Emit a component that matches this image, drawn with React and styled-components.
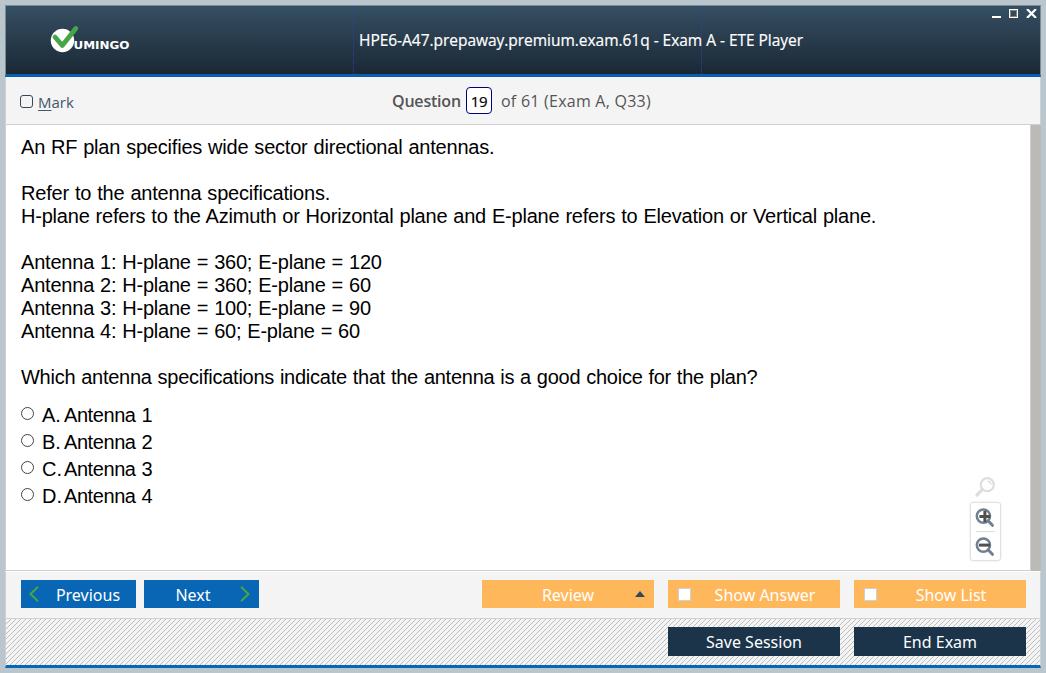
import React from "react";
import styled, { createGlobalStyle } from "styled-components";

const Global = createGlobalStyle`
  * { box-sizing: border-box; }
  body { margin: 0; background: #b9c6cd; }
  button { font: inherit; border: 0; padding: 0; margin: 0; }
`;

const Desktop = styled.div`
  width: 1046px;
  height: 673px;
  padding: 5px;
  background: #b9c6cd;
  font-family: "Open Sans", "Noto Sans", sans-serif;
`;

const Window = styled.main`
  display: flex;
  flex-direction: column;
  width: 1036px;
  height: 663px;
`;

const Header = styled.header`
  position: relative;
  display: flex;
  height: 72px;
  border: 1px solid #7b8c91;
  border-bottom: 3px solid #0560b0;
  background: linear-gradient(#364f63, #1a2835);
`;

const HeaderCell = styled.div`
  width: ${(p) => p.$width}px;
  flex: none;
  border-right: ${(p) => (p.$last ? "0" : "1px dotted #3040a0")};
`;

const LogoSvg = styled.svg`
  display: block;
  margin: 18px 0 0 43px;
`;

const Title = styled.h1`
  position: absolute;
  left: 353px;
  top: 23px;
  margin: 0;
  color: #fff;
  font-size: 15.5px;
  font-weight: 400;
  line-height: 22px;
  white-space: nowrap;
  letter-spacing: -0.03px;
  -webkit-text-stroke: 0.2px #fff;
`;

const WindowControls = styled.div`
  position: absolute;
  right: 3px;
  top: 3px;
  display: flex;
`;

const Toolbar = styled.div`
  display: flex;
  align-items: center;
  height: 48px;
  padding-left: 14px;
  border: 1px solid #cfcfcf;
  border-top: 0;
  background: #f4f4f4;
  color: #555;
  font-size: 16px;
  line-height: 24px;
  white-space: nowrap;
`;

const MarkLabel = styled.label`
  display: flex;
  align-items: center;
  width: 372px;
  padding-top: 3px;
  color: #44566a;
  font-size: 15px;
  u { text-underline-offset: 2px; }
`;

const MarkBox = styled.span`
  width: 13px;
  height: 13px;
  margin: -1px 5px 0 0;
  border: 1px solid #34495e;
  border-radius: 3px;
`;

const QuestionWord = styled.span`
  width: 74px;
  font-weight: 600;
  letter-spacing: -0.2px;
`;

const NumberBox = styled.span`
  width: 26px;
  height: 27px;
  margin-right: 9px;
  border: 1px solid #000080;
  border-radius: 4px;
  background: #fff;
  color: #000;
  font-size: 15px;
  line-height: 26px;
  text-align: center;
  letter-spacing: -0.3px;
  -webkit-text-stroke: 0.2px #000;
`;

const Total = styled.span`
  letter-spacing: 0.24px;
`;

const Content = styled.section`
  position: relative;
  height: 446px;
  padding: 11px 0 0 15px;
  border-left: 1px solid #cfcfcf;
  border-right: 10px solid #bbbab6;
  box-shadow: inset -1px -1px 0 #cfcfcf;
  background: #fff;
  color: #000;
  font-family: "Liberation Sans", Arial, sans-serif;
  font-size: 20px;
  line-height: 23px;
  white-space: nowrap;
`;

const Line = styled.p`
  height: 23px;
  margin: 0;
  letter-spacing: ${(p) => p.$spacing}px;
  word-spacing: 0.6px;
`;

const Options = styled.div`
  display: flex;
  flex-direction: column;
  margin-top: 13px;
`;

const Option = styled.label`
  display: flex;
  height: 27px;
  line-height: 27px;
`;

const Radio = styled.span`
  width: 13px;
  height: 13px;
  margin: 5px 8px 0 0;
  border: 1px solid #444;
  border-radius: 50%;
`;

const Letter = styled.span`
  width: 22px;
`;

const OptionText = styled.span`
  letter-spacing: -0.42px;
  word-spacing: 0.7px;
`;

const ZoomTools = styled.div`
  position: absolute;
  left: 964px;
  top: 351px;
  display: flex;
  flex-direction: column;
  width: 31px;
`;

const ZoomPanel = styled.div`
  display: flex;
  flex-direction: column;
  align-items: center;
  height: 59px;
  border: 1px solid #e2e2e2;
  border-radius: 3px;
  box-shadow: 0 0 2px #ddd;
`;

const Divider = styled.div`
  width: 19px;
  height: 1px;
  background: #dcdcdc;
`;

const ToolIcon = styled.svg`
  display: block;
  flex: none;
`;

const Navigation = styled.footer`
  display: flex;
  height: 48px;
  padding: 8px 14px 0 15px;
  border: 1px solid #cfcfcf;
  border-top: 1px solid #fff;
  background: #f4f4f4;
`;

const ButtonBase = styled.button`
  display: flex;
  align-items: center;
  justify-content: center;
  height: 28px;
  color: #fff;
  font-family: "Noto Sans", sans-serif;
  font-size: 16px;
  line-height: 28px;
  white-space: nowrap;
`;

const NavButton = styled(ButtonBase)`
  position: relative;
  width: 115px;
  margin-right: 8px;
  padding: 2px ${(p) => p.$right || 0}px 0 ${(p) => p.$left || 0}px;
  background: #0866b5;
`;

const Chevron = styled.svg`
  position: absolute;
  top: 6px;
  ${(p) => p.$side}: ${(p) => (p.$side === "left" ? 8 : 9)}px;
`;

const ActionGroup = styled.div`
  display: flex;
  gap: 14px;
  margin-left: auto;
`;

const ActionButton = styled(ButtonBase)`
  position: relative;
  width: 172px;
  padding: 2px 0 0 ${(p) => p.$shift || 0}px;
  background: #ffb75c;
`;

const ActionCheck = styled.span`
  position: absolute;
  left: 10px;
  top: 8px;
  width: 13px;
  height: 13px;
  border: 1px solid #d0d0d0;
  background: #fff;
`;

const Arrow = styled.svg`
  position: absolute;
  right: 9px;
  top: 11px;
`;

const SessionBar = styled.div`
  display: flex;
  justify-content: flex-end;
  gap: 14px;
  height: 49px;
  padding: 8px 14px 0 0;
  border: 1px solid #cfcfcf;
  border-top: 0;
  border-bottom: 3px solid #0866b5;
  background: #f4f4f4 linear-gradient(135deg, transparent 45%, #bdbdbd 45% 55%, transparent 55%) 0 0 / 5px 5px;
`;

const SessionButton = styled(ButtonBase)`
  width: 172px;
  height: 29px;
  padding-top: 1px;
  background: #1b344a;
`;

const Logo = () => (
  <LogoSvg width="84" height="32" viewBox="0 0 84 32">
    <circle cx="13.5" cy="16.5" r="11.7" fill="#fff" />
    <path d="M6 13 13.3 21.5 26.8 4.5" fill="none" stroke="#46a546" strokeWidth="4.8" strokeLinecap="round" strokeLinejoin="round" />
    <text x="24.5" y="25" fill="#fff" fontFamily="DejaVu Sans" fontWeight="700" fontSize="10" textLength="56" lengthAdjust="spacingAndGlyphs">UMINGO</text>
  </LogoSvg>
);

const Magnifier = ({ plus }) => (
  <ToolIcon width="29" height="28" viewBox="0.6 0.4 29 28">
    <circle cx="13" cy="13.5" r="6.6" fill="#fff" stroke="#708090" strokeWidth="2.5" />
    <path d="m17.7 18.2 4.3 4.5" stroke="#708090" strokeWidth="3" strokeLinecap="round" />
    <path d={plus ? "M9 14h11M14.5 8.5v11" : "M8.5 13.5h11"} stroke="#505050" strokeWidth="3" />
  </ToolIcon>
);

const lines = [
  ["An RF plan specifies wide sector directional antennas.", -0.205],
  ["", 0],
  ["Refer to the antenna specifications.", -0.19],
  ["H-plane refers to the Azimuth or Horizontal plane and E-plane refers to Elevation or Vertical plane.", -0.21],
  ["", 0],
  ["Antenna 1: H-plane = 360; E-plane = 120", -0.21],
  ["Antenna 2: H-plane = 360; E-plane = 60", -0.21],
  ["Antenna 3: H-plane = 100; E-plane = 90", -0.21],
  ["Antenna 4: H-plane = 60; E-plane = 60", -0.21],
  ["", 0],
  ["Which antenna specifications indicate that the antenna is a good choice for the plan?", -0.257],
];

export default function App() {
  return (
    <Desktop>
      <Global />
      <Window>
        <Header>
          <HeaderCell $width={348}><Logo /></HeaderCell>
          <HeaderCell $width={348} />
          <HeaderCell $width={338} $last />
          <Title>HPE6-A47.prepaway.premium.exam.61q - Exam A - ETE Player</Title>
          <WindowControls>
            <svg width="45" height="9" viewBox="0 0 45 9" shapeRendering="crispEdges">
              <path d="M0 7h9v2H0z" fill="#fff" />
              <rect x="18.5" y="1.5" width="6" height="6" fill="none" stroke="#8a8078" />
              <rect x="17.5" y="0.5" width="8" height="8" fill="none" stroke="#fff" />
              <path d="m35 0 9 9M44 0l-9 9" stroke="#fff" strokeWidth="2.2" shapeRendering="auto" />
            </svg>
          </WindowControls>
        </Header>
        <Toolbar>
          <MarkLabel><MarkBox /><span><u>M</u>ark</span></MarkLabel>
          <QuestionWord>Question</QuestionWord>
          <NumberBox>19</NumberBox>
          <Total>of 61 (Exam A, Q33)</Total>
        </Toolbar>
        <Content>
          {lines.map(([text, spacing], i) => <Line key={i} $spacing={spacing}>{text}</Line>)}
          <Options>
            {["A", "B", "C", "D"].map((c, i) => (
              <Option key={c}><Radio /><Letter>{c}.</Letter><OptionText>Antenna {i + 1}</OptionText></Option>
            ))}
          </Options>
          <ZoomTools>
            <ToolIcon width="31" height="26" viewBox="0 0 31 26">
              <circle cx="17.3" cy="8.7" r="6.5" fill="none" stroke="#dedede" strokeWidth="2.2" />
              <path d="M12.3 13.7 7 19" stroke="#dedede" strokeWidth="3.2" strokeLinecap="round" />
              <path d="M17.5 5.2a3.5 3.5 0 0 1 3.5 3.5" fill="none" stroke="#dedede" strokeWidth="1.4" />
            </ToolIcon>
            <ZoomPanel>
              <Magnifier plus />
              <Divider />
              <Magnifier />
            </ZoomPanel>
          </ZoomTools>
        </Content>
        <Navigation>
          <NavButton $left={19}>
            <Chevron $side="left" width="10" height="16" viewBox="0 0 10 16"><path d="M9 .7 1.5 8 9 15.3" fill="none" stroke="#46a546" strokeWidth="2" /></Chevron>
            Previous
          </NavButton>
          <NavButton $right={17}>
            Next
            <Chevron $side="right" width="10" height="16" viewBox="0 0 10 16"><path d="M1 .7 8.5 8 1 15.3" fill="none" stroke="#46a546" strokeWidth="2" /></Chevron>
          </NavButton>
          <ActionGroup>
            <ActionButton>Review<Arrow width="10" height="6"><path d="M0 6 5 0l5 6z" fill="#34495e" /></Arrow></ActionButton>
            <ActionButton $shift={22}><ActionCheck />Show Answer</ActionButton>
            <ActionButton $shift={22}><ActionCheck />Show List</ActionButton>
          </ActionGroup>
        </Navigation>
        <SessionBar>
          <SessionButton>Save Session</SessionButton>
          <SessionButton>End Exam</SessionButton>
        </SessionBar>
      </Window>
    </Desktop>
  );
}
